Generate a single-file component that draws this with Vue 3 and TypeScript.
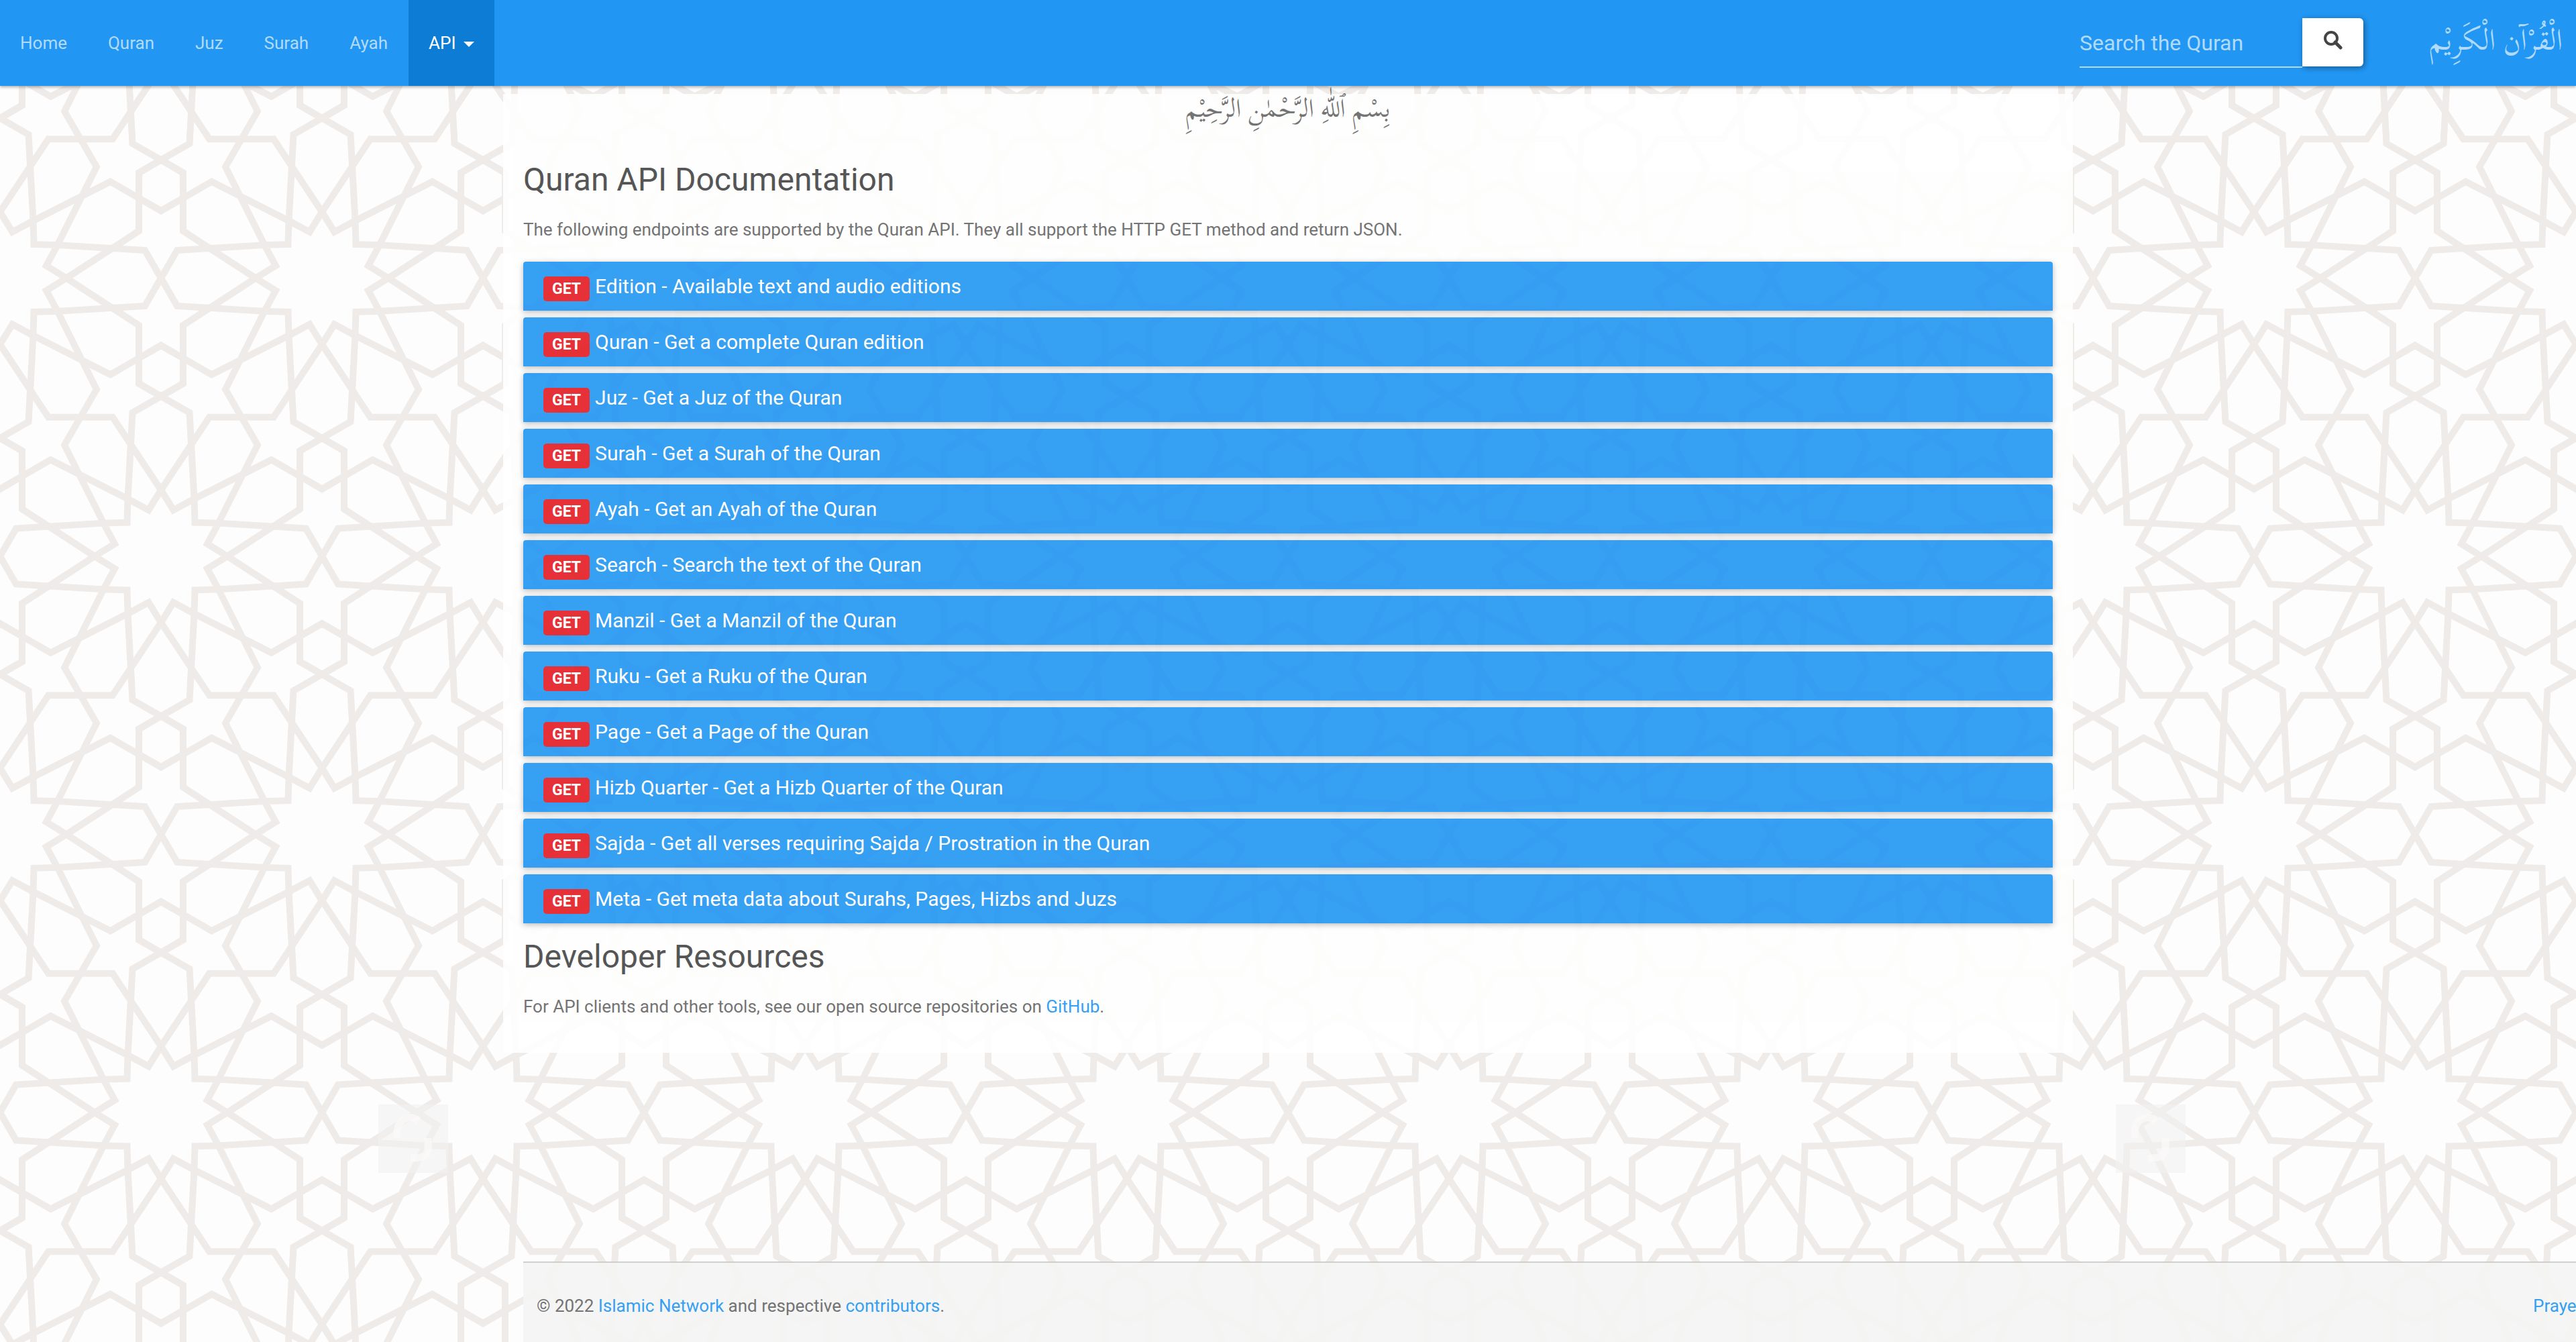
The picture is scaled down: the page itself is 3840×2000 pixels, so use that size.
<script setup lang="ts">
type Point = [number, number]

interface Endpoint {
  name: string
  description: string
}

const navItems: string[] = ['Home', 'Quran', 'Juz', 'Surah', 'Ayah']

const endpoints: Endpoint[] = [
  { name: 'Edition', description: 'Available text and audio editions' },
  { name: 'Quran', description: 'Get a complete Quran edition' },
  { name: 'Juz', description: 'Get a Juz of the Quran' },
  { name: 'Surah', description: 'Get a Surah of the Quran' },
  { name: 'Ayah', description: 'Get an Ayah of the Quran' },
  { name: 'Search', description: 'Search the text of the Quran' },
  { name: 'Manzil', description: 'Get a Manzil of the Quran' },
  { name: 'Ruku', description: 'Get a Ruku of the Quran' },
  { name: 'Page', description: 'Get a Page of the Quran' },
  { name: 'Hizb Quarter', description: 'Get a Hizb Quarter of the Quran' },
  { name: 'Sajda', description: 'Get all verses requiring Sajda / Prostration in the Quran' },
  { name: 'Meta', description: 'Get meta data about Surahs, Pages, Hizbs and Juzs' },
]

// One twelfth of the star lattice; the rest follows by rotation and mirroring.
const wedge: Point[][] = [
  [[99, 0], [69, 18.5], [85.7, 49.5]],
  [[99, 0], [207, 70.4], [207, 119.5]],
  [[85.7, 49.5], [216, 41.5], [240, 0]],
  [[207, 119.5], [240, 100.6], [273, 119.5]],
]

const star: string = (() => {
  const parts: string[] = []
  for (let turn = 0; turn < 6; turn++) {
    const a = (turn * Math.PI) / 3
    for (const flip of [1, -1]) {
      for (const line of wedge) {
        const pts = line.map(([x, y]) => {
          const fy = y * flip
          const px = x * Math.cos(a) - fy * Math.sin(a)
          const py = x * Math.sin(a) + fy * Math.cos(a)
          return `${px.toFixed(1)} ${py.toFixed(1)}`
        })
        parts.push('M' + pts.join('L'))
      }
    }
  }
  return parts.join('')
})()

const starCentres: Point[] = [
  [0, 415.5], [480, 415.5], [240, 0], [240, 831], [-240, 0], [720, 0], [-240, 831], [720, 831],
]
</script>

<template>
  <div class="page">
    <svg class="backdrop" aria-hidden="true">
      <defs>
        <pattern id="lattice" width="480" height="829" patternUnits="userSpaceOnUse" viewBox="0 0 480 831" preserveAspectRatio="none">
          <path
            v-for="(c, i) in starCentres"
            :key="i"
            :d="star"
            :transform="`translate(${c[0]} ${c[1]})`"
            fill="none"
            stroke="#efebe9"
            stroke-width="10"
          />
        </pattern>
      </defs>
      <rect width="100%" height="100%" fill="#fdfdfd" />
      <rect width="100%" height="100%" fill="url(#lattice)" />
      <g v-for="x in [564, 3154]" :key="x" :transform="`translate(${x} 1646)`">
        <rect width="104" height="102" fill="#f1f1f1" opacity="0.6" />
        <path d="M28 50c-2-34 22-34 32-26M74 50v14c0 14-8 16-26 16" fill="none" stroke="#fcfafa" stroke-width="11" opacity="0.7" />
      </g>
    </svg>

    <nav class="navbar">
      <ul class="menu">
        <li v-for="item in navItems" :key="item"><a href="#">{{ item }}</a></li>
        <li><a href="#" class="active">API <span class="caret"></span></a></li>
      </ul>
      <form class="search" @submit.prevent>
        <input type="text" placeholder="Search the Quran" aria-label="Search the Quran" />
        <button type="submit" aria-label="Search">
          <svg viewBox="0 0 28 28" width="28" height="28">
            <circle cx="11" cy="11" r="9" fill="none" stroke="#444" stroke-width="4" />
            <path d="M17 17L25 25" stroke="#444" stroke-width="5" stroke-linecap="round" />
          </svg>
        </button>
      </form>
      <a href="#" class="brand" lang="ar" dir="rtl">الْقُرْآن الْكَرِيْم</a>
    </nav>

    <main class="container">
      <p class="bismillah" lang="ar" dir="rtl">بِسْمِ ٱللّٰهِ الرَّحْمٰنِ الرَّحِيْمِ</p>
      <h1>Quran API Documentation</h1>
      <p>The following endpoints are supported by the Quran API. They all support the HTTP GET method and return JSON.</p>
      <ul class="endpoints">
        <li v-for="e in endpoints" :key="e.name">
          <a href="#"><span class="label">GET</span> {{ e.name }} - {{ e.description }}</a>
        </li>
      </ul>
      <h1>Developer Resources</h1>
      <p>For API clients and other tools, see our open source repositories on <a href="#">GitHub</a>.</p>
    </main>

    <footer class="footer">
      <span>© 2022 <a href="#">Islamic Network</a> and respective <a href="#">contributors</a>.</span>
      <a href="#" class="times">Prayer Times</a>
    </footer>
  </div>
</template>

<style>
body {
  margin: 0;
}
</style>

<style scoped>
* {
  box-sizing: border-box;
}

.page {
  position: relative;
  display: flex;
  flex-direction: column;
  min-height: 100vh;
  overflow: hidden;
  background: #fdfdfd;
  color: #666;
  font-family: Roboto, "Open Sans", sans-serif;
  font-size: 26px;
  line-height: 48px;
}

.backdrop {
  position: absolute;
  inset: 0;
  width: 100%;
  height: 100%;
}

a {
  color: #2196f3;
  text-decoration: none;
}

ul {
  margin: 0;
  padding: 0;
  list-style: none;
}

.navbar {
  position: relative;
  z-index: 1;
  display: flex;
  align-items: center;
  height: 128px;
  background: #2196f3;
  box-shadow: 0 2px 4px rgba(0, 0, 0, 0.3);
}

.menu {
  display: flex;
  gap: 1px;
  margin-right: auto;
}

.menu a {
  display: flex;
  align-items: center;
  height: 128px;
  padding: 0 30px;
  color: #b2dbfb;
}

.menu .active {
  background: #0c7cd5;
  color: #fff;
}

.caret {
  margin: 4px 0 0 12px;
  border-top: 8px solid;
  border-right: 8px solid transparent;
  border-left: 8px solid transparent;
}

.search {
  display: flex;
}

.search input {
  width: 332px;
  height: 74px;
  padding: 0;
  border: 0;
  background: none;
  box-shadow: inset 0 -2px 0 #b2dbfb;
  color: #fff;
  font: 32px Roboto, sans-serif;
  outline: none;
}

.search input::placeholder {
  color: #b2dbfb;
  opacity: 1;
}

.search button {
  display: flex;
  align-items: center;
  justify-content: center;
  width: 91px;
  height: 72px;
  padding: 0 0 6px;
  border: 0;
  border-radius: 0 6px 6px 0;
  background: #fff;
  box-shadow: 2px 2px 8px rgba(0, 0, 0, 0.4);
}

.brand {
  width: 317px;
  padding: 0 20px 8px;
  color: #b2dbfb;
  font-family: "Scheherazade New", "Noto Naskh Arabic", "DejaVu Sans", serif;
  font-size: 44px;
  white-space: nowrap;
}

.container {
  position: relative;
  width: 2340px;
  max-width: 100%;
  min-height: 1429px;
  margin: 12px auto 0;
  padding: 0 30px;
  background: #fff;
  opacity: 0.9;
}

.container p {
  margin: 0;
}

.container .bismillah {
  height: 94px;
  font-family: "Scheherazade New", "Noto Naskh Arabic", "DejaVu Sans", serif;
  font-size: 38px;
  line-height: 44px;
  text-align: center;
}

h1 {
  margin: 0;
  padding-bottom: 16px;
  color: #444;
  font-size: 48px;
  font-weight: 400;
  line-height: 68px;
}

.endpoints {
  display: flex;
  flex-direction: column;
  gap: 10px;
  padding: 24px 0 16px;
}

.endpoints a {
  display: flex;
  align-items: center;
  gap: 8px;
  height: 73px;
  padding: 0 30px;
  border-radius: 4px 4px 0 0;
  background: #2196f3;
  box-shadow: 0 2px 8px rgba(0, 0, 0, 0.3);
  color: #fff;
  font-size: 30px;
}

.label {
  height: 37px;
  margin-top: 7px;
  padding: 0 13px;
  border-radius: 5px;
  background: #e51c23;
  font-size: 23px;
  font-weight: 700;
  line-height: 37px;
}

.footer {
  position: relative;
  display: flex;
  justify-content: space-between;
  height: 120px;
  margin: auto 0 0 780px;
  padding: 40px 0 0 20px;
  border-top: 2px solid #ccc;
  background: #f5f5f5;
  opacity: 0.9;
}

.times {
  width: 64px;
  white-space: nowrap;
}
</style>
